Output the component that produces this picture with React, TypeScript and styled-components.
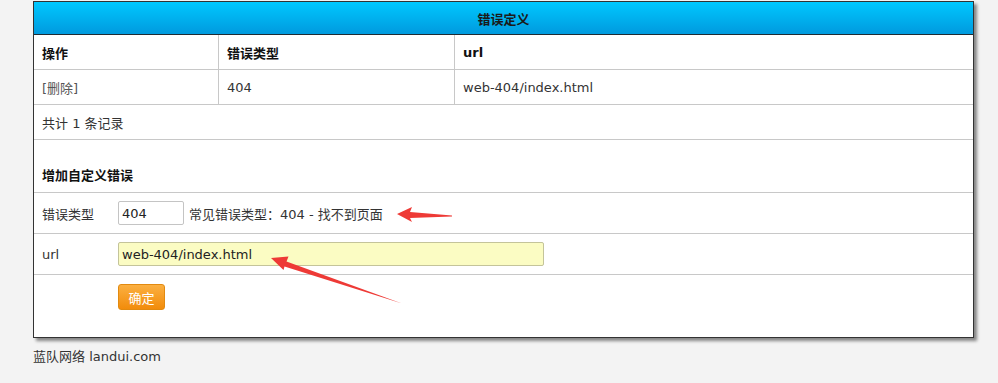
import React from "react";
import styled, { createGlobalStyle } from "styled-components";

const GlobalStyle = createGlobalStyle`
  html, body {
    margin: 0;
    padding: 0;
    background: #f3f3f3;
  }
  body {
    font-family: "DejaVu Sans", "Noto Sans CJK SC", sans-serif;
    font-size: 13px;
    color: #333;
  }
`;

const Page = styled.div`
  position: relative;
  width: 998px;
  height: 383px;
  padding: 1px 0 0 33px;
  box-sizing: border-box;
`;

const Panel = styled.div`
  width: 941px;
  background: #fff;
  border: 1px solid #333;
  box-sizing: border-box;
  box-shadow: 3px 3px 3px rgba(0, 0, 0, 0.45);
`;

const TitleBar = styled.div`
  height: 33px;
  box-sizing: border-box;
  display: flex;
  align-items: center;
  justify-content: center;
  background: linear-gradient(#00c8ff, #009ade);
  border-bottom: 1px solid #1e2b33;
  font-weight: bold;
  color: #1a1a1a;
`;

const Row = styled.div<{ $cols?: string }>`
  display: grid;
  grid-template-columns: ${(p) => p.$cols || "1fr"};
  height: 35px;
  box-sizing: border-box;
  border-bottom: 1px solid #c8c8c8;
`;

const Cell = styled.div<{ $head?: boolean }>`
  display: flex;
  align-items: center;
  padding-left: 8px;
  border-right: 1px solid #c8c8c8;
  font-weight: ${(p) => (p.$head ? "bold" : "normal")};
  color: ${(p) => (p.$head ? "#111" : "#333")};
  &:last-child {
    border-right: none;
  }
`;

const DeleteLink = styled.span`
  color: #555;
  cursor: pointer;
`;

const SectionTitle = styled.div`
  height: 53px;
  padding: 0 0 8px 8px;
  display: flex;
  align-items: flex-end;
  box-sizing: border-box;
  font-weight: bold;
  color: #111;
  border-bottom: 1px solid #c8c8c8;
`;

const FormRow = styled.div<{ $h: number; $last?: boolean }>`
  height: ${(p) => p.$h}px;
  display: flex;
  align-items: ${(p) => (p.$last ? "flex-start" : "center")};
  padding: ${(p) => (p.$last ? "9px 0 0 8px" : "0 0 0 8px")};
  box-sizing: border-box;
  border-bottom: ${(p) => (p.$last ? "none" : "1px solid #c8c8c8")};
`;

const Label = styled.div`
  width: 76px;
  flex: none;
`;

const Input = styled.input<{ $w: number; $hl?: boolean }>`
  width: ${(p) => p.$w}px;
  height: 24px;
  box-sizing: border-box;
  border: 1px solid ${(p) => (p.$hl ? "#c4c49a" : "#c4c4c4")};
  border-radius: 2px;
  background: ${(p) => (p.$hl ? "#fbfcc3" : "#fff")};
  padding: 0 3px;
  font: inherit;
  font-size: 13px;
  color: #222;
  outline: none;
`;

const Hint = styled.span`
  margin-left: 5px;
  color: #333;
`;

const Button = styled.button`
  width: 47px;
  height: 26px;
  padding: 0;
  border: 1px solid #e28a10;
  border-radius: 3px;
  background: linear-gradient(#fbb041, #f28c0b);
  color: #fff;
  font: inherit;
  font-size: 13px;
  cursor: pointer;
`;

const Footer = styled.div`
  margin-top: 8px;
  font-size: 13px;
  color: #333;
`;

const Overlay = styled.svg`
  position: absolute;
  top: 0;
  left: 0;
  pointer-events: none;
`;

const COLS = "185px 236px 1fr";

const App = () => {
  return (
    <Page>
      <GlobalStyle />
      <Panel>
        <TitleBar>错误定义</TitleBar>
        <Row $cols={COLS}>
          <Cell $head>操作</Cell>
          <Cell $head>错误类型</Cell>
          <Cell $head>url</Cell>
        </Row>
        <Row $cols={COLS}>
          <Cell>
            <DeleteLink>[删除]</DeleteLink>
          </Cell>
          <Cell>404</Cell>
          <Cell>web-404/index.html</Cell>
        </Row>
        <Row>
          <Cell>共计 1 条记录</Cell>
        </Row>
        <SectionTitle>增加自定义错误</SectionTitle>
        <FormRow $h={41}>
          <Label>错误类型</Label>
          <Input $w={66} defaultValue="404" />
          <Hint>常见错误类型：404 - 找不到页面</Hint>
        </FormRow>
        <FormRow $h={41}>
          <Label>url</Label>
          <Input $w={426} $hl defaultValue="web-404/index.html" />
        </FormRow>
        <FormRow $h={62} $last>
          <Label />
          <Button>确定</Button>
        </FormRow>
      </Panel>
      <Footer>蓝队网络 landui.com</Footer>
      <Overlay width={998} height={383} viewBox="0 0 998 383">
        <polygon
          points="397,214 412,207 410,212 452,215.5 452,216.5 410,218 412,222"
          fill="#ee3a36"
        />
        <polygon
          points="271,258 288.5,256.5 286.5,261.5 402,303.5 284.5,266.5 283.5,270"
          fill="#ee3a36"
        />
      </Overlay>
    </Page>
  );
};

export default App;
